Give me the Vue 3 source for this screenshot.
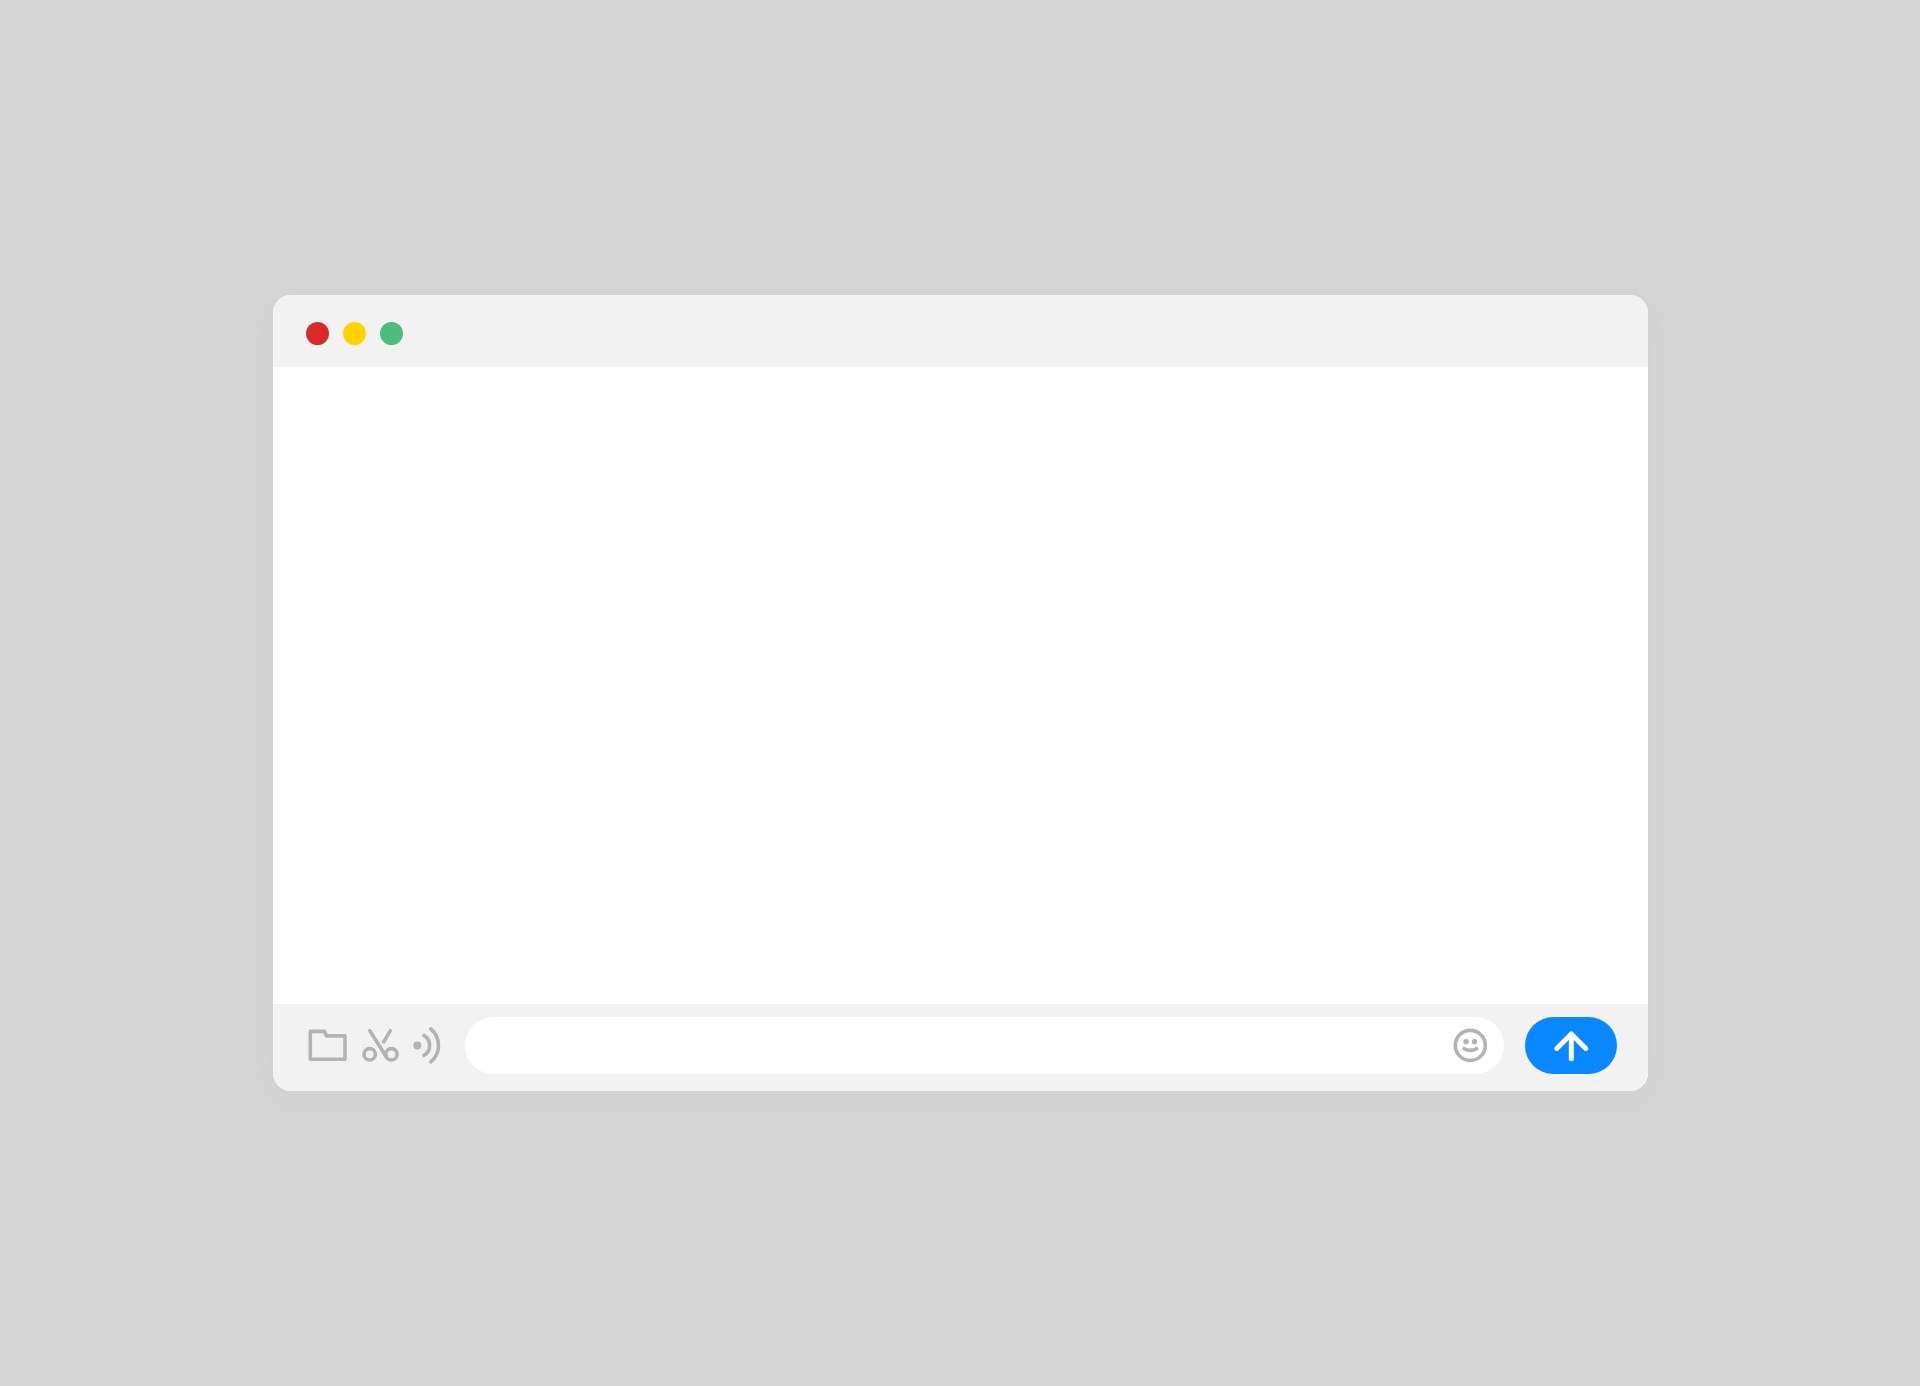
<script setup>
import { ref } from 'vue'

const message = ref('')
const controls = [
  { name: 'Close', color: '#d92a2a' },
  { name: 'Minimize', color: '#ffd200' },
  { name: 'Zoom', color: '#4dbd7d' },
]
</script>

<template>
  <main class="desktop">
    <section class="window">
      <header class="titlebar">
        <button
          v-for="control in controls"
          :key="control.name"
          class="dot"
          type="button"
          :aria-label="control.name"
          :style="{ background: control.color }"
        ></button>
      </header>

      <div class="conversation"></div>

      <form class="composer" @submit.prevent>
        <div class="tools">
          <button class="tool" type="button" aria-label="Attach a file">
            <svg width="40" height="41" viewBox="0 0 40 41">
              <path d="M2.3 6.4H16.5L18.5 10.9H37V34.3H2.3Z" />
            </svg>
          </button>
          <button class="tool" type="button" aria-label="Cut">
            <svg width="40" height="41" viewBox="0 0 40 41">
              <circle cx="9.7" cy="29.3" r="5.7" />
              <circle cx="31.4" cy="29.3" r="5.7" />
              <path d="M9.8 5.7L26.3 31.7M30.4 5.7L23.7 16.9" />
            </svg>
          </button>
          <button class="tool" type="button" aria-label="Voice message">
            <svg width="30" height="41" viewBox="0 0 30 41">
              <circle class="solid" cx="5.4" cy="20.4" r="4" />
              <path d="M11.9 10.4A11.6 11.6 0 0 1 11.9 30.4M18.8 4A21.3 21.3 0 0 1 18.8 36.8" />
            </svg>
          </button>
        </div>

        <div class="field">
          <input v-model="message" type="text" aria-label="Message" />
          <button class="tool" type="button" aria-label="Insert emoji">
            <svg width="40" height="41" viewBox="0 0 40 41">
              <circle cx="20.3" cy="20.4" r="15" />
              <circle class="solid" cx="16.1" cy="16.8" r="2.7" />
              <circle class="solid" cx="24.5" cy="16.8" r="2.7" />
              <path d="M13.9 23.6Q20.3 27.2 26.7 23.6" />
            </svg>
          </button>
        </div>

        <button class="send" type="submit" aria-label="Send">
          <svg width="40" height="41" viewBox="0 0 40 41">
            <path d="M20.3 33.7V9M5.8 23.4L20.3 9L34.8 23.4" />
          </svg>
        </button>
      </form>
    </section>
  </main>
</template>

<style>
body {
  margin: 0;
  background: #d4d4d4;
}
</style>

<style scoped>
.desktop {
  box-sizing: border-box;
  display: flex;
  min-height: 100vh;
  padding: 295px 272px 295px 273px;
  background: #d4d4d4;
  font-family: "Liberation Sans", Arial, sans-serif;
}

.window {
  flex: 1;
  min-width: 0;
  display: flex;
  flex-direction: column;
  overflow: hidden;
  border-radius: 18px;
  background: #fff;
  box-shadow: 0 6px 36px rgba(0, 0, 0, 0.02);
}

button {
  padding: 0;
  border: 0;
  background: none;
  cursor: pointer;
}

svg {
  display: block;
  fill: none;
  stroke: #b3b3b3;
  stroke-width: 3.6;
  stroke-linecap: round;
  stroke-linejoin: round;
}

.solid {
  fill: #b3b3b3;
  stroke: none;
}

.titlebar {
  display: flex;
  align-items: center;
  gap: 14px;
  height: 72px;
  padding: 4px 33px 0;
  box-sizing: border-box;
  background: #f2f2f2;
}

.dot {
  width: 23px;
  height: 23px;
  border-radius: 50%;
}

.conversation {
  flex: 1;
}

.composer {
  display: flex;
  align-items: center;
  padding: 13px 31px 17px 35px;
  background: #f2f2f2;
}

.tools {
  display: flex;
  gap: 12px;
  margin-right: 23px;
}

.field {
  flex: 1;
  min-width: 0;
  display: flex;
  align-items: center;
  height: 57px;
  box-sizing: border-box;
  padding: 0 14px 0 28px;
  border-radius: 29px;
  background: #fff;
}

.field input {
  flex: 1;
  min-width: 0;
  padding: 0;
  border: 0;
  outline: 0;
  background: transparent;
  color: #333;
  font: inherit;
  font-size: 20px;
}

.send {
  display: grid;
  place-items: center;
  width: 92px;
  height: 57px;
  margin-left: 21px;
  border-radius: 29px;
  background: #0a88ff;
}

.send svg {
  stroke: #fff;
  stroke-width: 5;
}
</style>
